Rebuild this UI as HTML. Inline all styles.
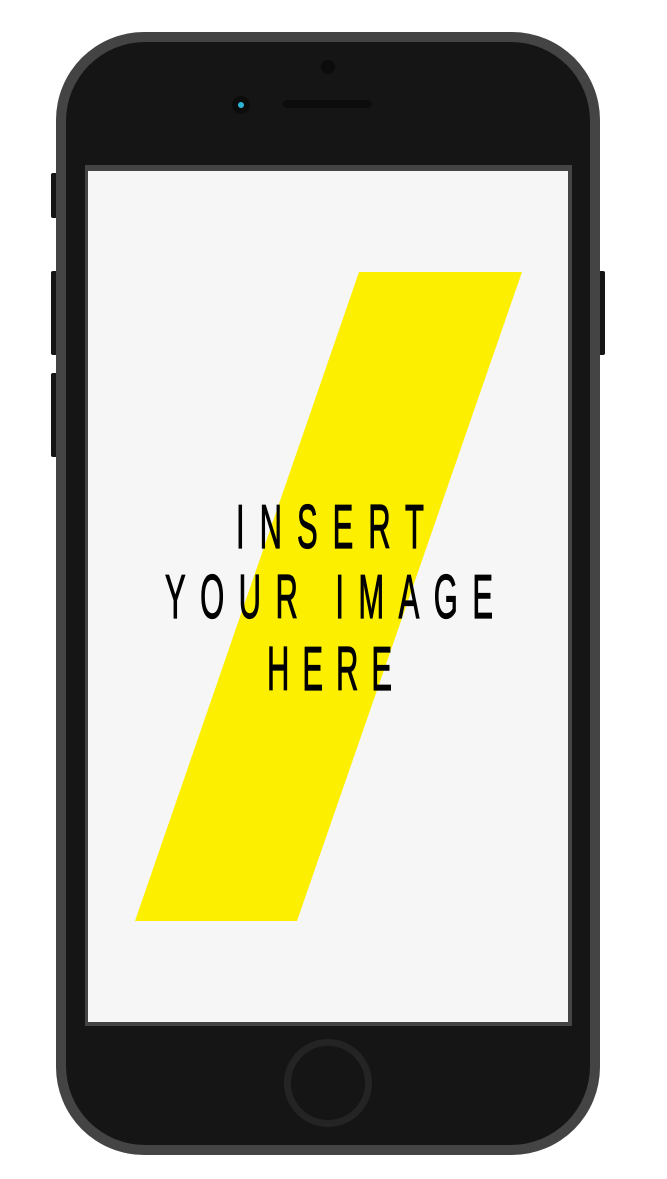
<!DOCTYPE html>
<html><head><meta charset="utf-8"><style>
html,body{margin:0;padding:0;background:#fff;width:667px;height:1179px;overflow:hidden}
svg{display:block}
</style></head><body>
<svg width="667" height="1179" viewBox="0 0 667 1179" xmlns="http://www.w3.org/2000/svg">
  <rect x="51" y="173" width="8" height="45" rx="2" fill="#151515"/>
  <rect x="51" y="271" width="8" height="84" rx="2" fill="#151515"/>
  <rect x="51" y="373" width="8" height="84" rx="2" fill="#151515"/>
  <rect x="597" y="271" width="8" height="84" rx="2" fill="#151515"/>
  <rect x="56" y="32" width="544" height="1123" rx="88" fill="#444"/>
  <rect x="66" y="42" width="524" height="1103" rx="79" fill="#151515"/>
  <circle cx="328" cy="67" r="7" fill="#0c0c0c"/>
  <rect x="283" y="100" width="89" height="8" rx="4" fill="#0c0c0c"/>
  <circle cx="241" cy="105" r="9" fill="#0c0c0c"/>
  <circle cx="241" cy="105" r="3" fill="#2bb5d2"/>
  <rect x="85" y="165" width="487" height="861" fill="#444"/>
  <rect x="88" y="171" width="480" height="851" fill="#f6f6f6"/>
  <polygon points="359,272 522,272 297,921 135,921" fill="#fdef00"/>
  <g transform="scale(0.5,1)" font-family="Liberation Sans, sans-serif" font-size="62" fill="#000" stroke="#000" stroke-width="1.2">
    <text x="472" y="548" textLength="376" lengthAdjust="spacing">INSERT</text>
    <text x="330" y="618" textLength="656" lengthAdjust="spacing" xml:space="preserve">YOUR IMAGE</text>
    <text x="534" y="690" textLength="250" lengthAdjust="spacing">HERE</text>
  </g>
  <circle cx="328" cy="1083" r="40.5" fill="none" stroke="#242424" stroke-width="7"/>
</svg>
</body></html>
